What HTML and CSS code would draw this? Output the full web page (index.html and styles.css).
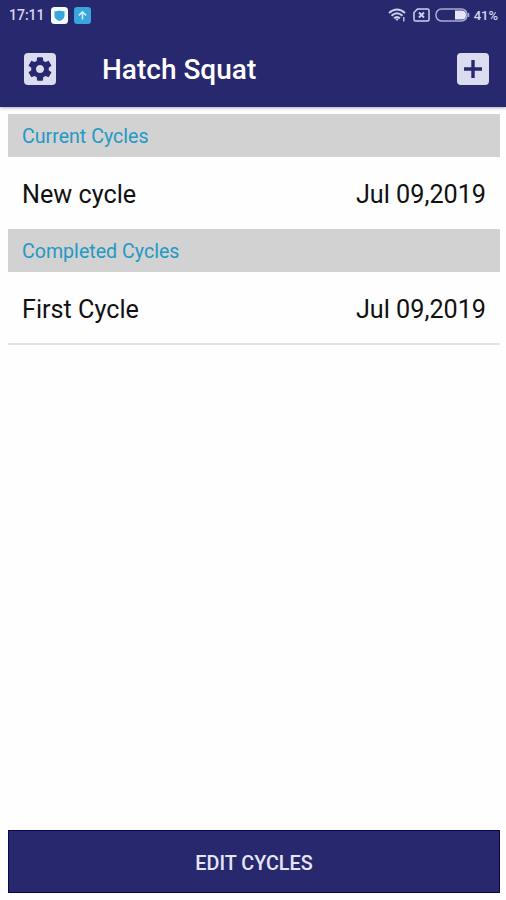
FILE: index.html
```html
<!DOCTYPE html>
<html lang="en">
<head>
    <meta charset="UTF-8">
    <meta name="viewport" content="width=device-width, initial-scale=1.0">
    <title>Hatch Squat</title>
    <link rel="stylesheet" href="styles.css">
</head>
<body>
    <header class="header">
        <div class="status-bar">
            <span class="time">17:11</span>
            <svg class="notification" width="17" height="17" viewBox="0 0 17 17">
                <rect width="17" height="17" rx="3.5" fill="#f5fbff"/>
                <path d="M3.500 4.300Q6.500 4.500 8.500 3.500Q10.500 4.500 13.500 4.300V9Q13 12.500 8.500 14Q4 12.500 3.500 9Z" fill="#38a5dc"/>
            </svg>
            <svg class="notification" width="17" height="17" viewBox="0 0 17 17">
                <rect width="17" height="17" rx="3" fill="#38a5dc"/>
                <path d="M8.500 12.500V5M4.800 8.300L8.500 4.800L12.200 8.300" fill="none" stroke="#c9f0f8" stroke-width="1.600"/>
            </svg>
            <div class="system">
                <svg width="19" height="14" viewBox="0 0 19 14" fill="none" stroke="#cfcfee" stroke-width="1.900">
                    <path d="M1 5Q9 -2 17 5M3.500 7.800Q9 2.800 14.500 7.800M6 10.300Q9 7.500 12 10.300"/>
                    <path d="M7 10.500H11L9 13Z" fill="#cfcfee" stroke="none"/>
                    <path d="M15.800 9V13.500" stroke-width="1.300"/>
                </svg>
                <svg class="sim" width="17" height="14" viewBox="0 0 17 14" fill="none" stroke="#cfcfee" stroke-width="1.500">
                    <path d="M4.500 1H14.500Q16 1 16 2.500V11.500Q16 13 14.500 13H2.500Q1 13 1 11.500V4.500Z"/>
                    <path d="M6 4.500L11 9.500M11 4.500L6 9.500" stroke-width="1.900"/>
                </svg>
                <svg class="battery" width="35" height="14" viewBox="0 0 35 14">
                    <rect x="1" y="1" width="31" height="12" rx="5.500" fill="none" stroke="#aaaad2" stroke-width="1.500"/>
                    <path d="M20 2.500H27.500Q31 3 31 7Q31 11 27.500 11.500H20Z" fill="#e6e6f6"/>
                    <path d="M33.500 5V9" stroke="#aaaad2" stroke-width="1.500"/>
                </svg>
                <span>41%</span>
            </div>
        </div>
        <div class="toolbar">
            <button class="icon-btn" aria-label="Settings">
                <svg width="28" height="28" viewBox="0 0 24 24" fill="#28286e">
                    <path d="M19.430 12.980c.04-.32.07-.64.07-.98s-.03-.66-.07-.98l2.110-1.650c.19-.15.24-.42.12-.64l-2-3.460c-.12-.22-.39-.3-.61-.22l-2.490 1c-.52-.4-1.080-.73-1.690-.98l-.38-2.650C14.460 2.180 14.250 2 14 2h-4c-.25 0-.46.18-.49.42l-.38 2.650c-.61.25-1.170.59-1.690.98l-2.490-1c-.23-.09-.49 0-.61.22l-2 3.460c-.13.22-.07.49.12.64l2.110 1.650c-.04.32-.07.65-.07.98s.03.66.07.98l-2.110 1.650c-.19.15-.24.42-.12.64l2 3.460c.12.22.39.3.61.22l2.490-1c.52.4 1.080.73 1.690.98l.38 2.650c.03.24.24.42.49.42h4c.25 0 .46-.18.49-.42l.38-2.650c.61-.25 1.170-.59 1.690-.98l2.490 1c.23.09.49 0 .61-.22l2-3.460c.12-.22.07-.49-.12-.64l-2.110-1.650zM12 15.500c-1.930 0-3.500-1.570-3.500-3.500s1.570-3.500 3.500-3.500 3.500 1.570 3.500 3.500-1.570 3.500-3.500 3.500z"/>
                </svg>
            </button>
            <h1>Hatch Squat</h1>
            <button class="icon-btn" aria-label="Add cycle">
                <svg width="18" height="18" viewBox="0 0 18 18" stroke="#28286e" stroke-width="3.400">
                    <path d="M9 0V18M0 9H18"/>
                </svg>
            </button>
        </div>
    </header>

    <main class="cycles">
        <h2>Current Cycles</h2>
        <div class="cycle">
            <span class="name">New cycle</span>
            <span class="date">Jul 09,2019</span>
        </div>
        <h2>Completed Cycles</h2>
        <div class="cycle last">
            <span class="name">First Cycle</span>
            <span class="date">Jul 09,2019</span>
        </div>
    </main>

    <button class="edit-btn">EDIT CYCLES</button>
</body>
</html>
```

FILE: styles.css
```css
* {
    box-sizing: border-box;
}
body {
    font-family: Roboto, sans-serif;
    background: #fefefe;
    margin: 0;
    height: 900px;
    display: flex;
    flex-direction: column;
    color: #111;
}
button {
    font-family: inherit;
    border: none;
    cursor: pointer;
}
.header {
    height: 107px;
    background: #28286e;
    box-shadow: 0 1px 3px rgba(40, 40, 110, 0.4);
}
.status-bar {
    display: flex;
    align-items: center;
    height: 30px;
    padding: 0 8px 0 9px;
    font-size: 14px;
    font-weight: 500;
    color: #d6d6f0;
}
.time {
    width: 42px;
}
.notification {
    margin-right: 6px;
}
.system {
    display: flex;
    align-items: center;
    margin-left: auto;
    font-size: 13px;
}
.sim {
    margin: 0 5px 0 6px;
}
.battery {
    margin-right: 4px;
}
.toolbar {
    display: flex;
    align-items: center;
    height: 77px;
    padding: 0 17px 0 24px;
}
.icon-btn {
    display: flex;
    align-items: center;
    justify-content: center;
    width: 32px;
    height: 32px;
    padding: 0;
    border-radius: 4px;
    background: #dcdcf0;
}
h1 {
    flex: 1;
    margin: 0 0 0 46px;
    padding-top: 2px;
    font-size: 28px;
    font-weight: 500;
    color: #fff;
}
.cycles {
    flex: 1;
    padding: 7px 6px 0 8px;
}
h2 {
    display: flex;
    align-items: center;
    height: 43px;
    margin: 0;
    padding: 2px 14px 0;
    background: #d2d2d2;
    font-size: 19.6px;
    font-weight: 400;
    color: #2299c4;
}
.cycle {
    display: flex;
    align-items: center;
    justify-content: space-between;
    height: 72px;
    padding: 3px 14px 0;
    font-size: 25.2px;
}
.last {
    height: 73px;
    border-bottom: 2px solid #e4e4e4;
}
.edit-btn {
    height: 63px;
    margin: 0 6px 7px 8px;
    padding-top: 4px;
    border: 1px solid #08084a;
    background: #28286e;
    font-size: 19.8px;
    font-weight: 500;
    color: #e6e6f8;
}
```
